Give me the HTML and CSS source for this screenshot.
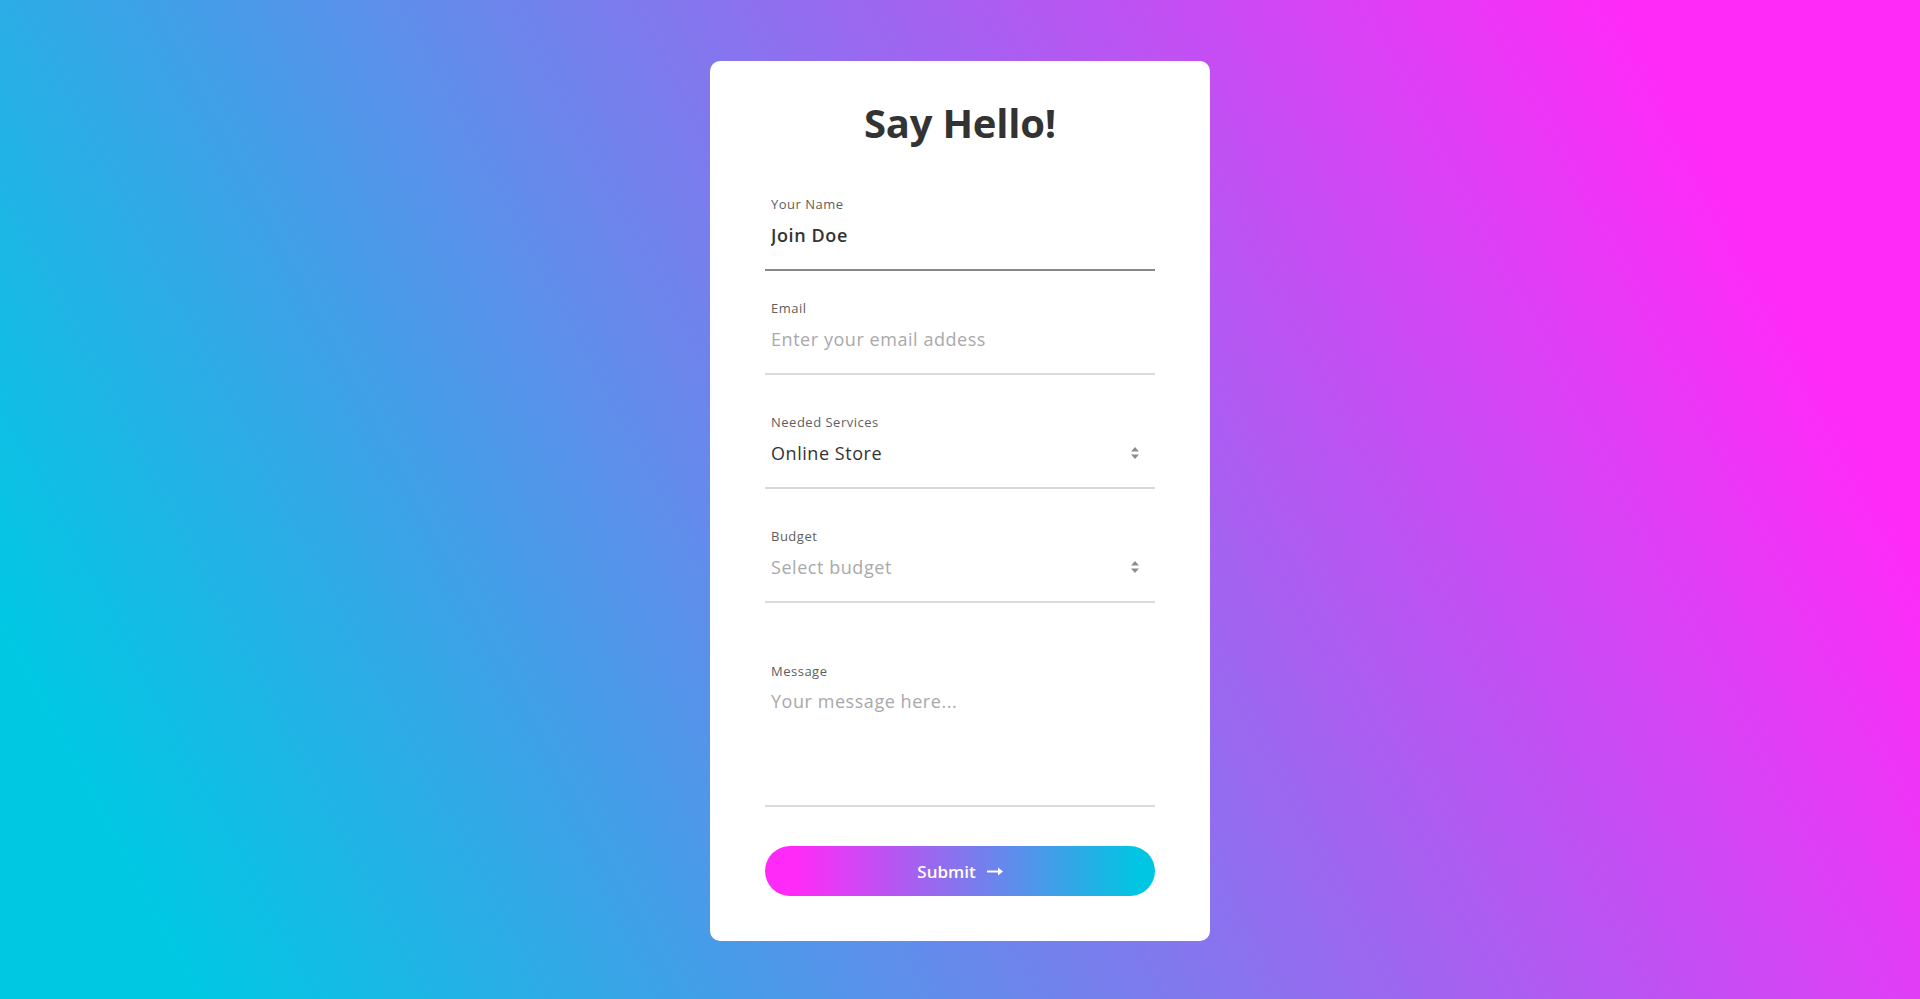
FILE: index.html
```html
<!DOCTYPE html>
<html lang="en">
<head>
<meta charset="utf-8">
<title>Say Hello!</title>
<link rel="stylesheet" href="styles.css">
</head>
<body>
<main class="page">
  <form class="card">
    <h1 class="title">Say Hello!</h1>

    <div class="field field-name">
      <label class="label" for="name">Your Name</label>
      <input class="control control-focus control-strong" id="name" type="text" value="Join Doe">
    </div>

    <div class="field field-email">
      <label class="label" for="email">Email</label>
      <input class="control" id="email" type="email" placeholder="Enter your email addess">
    </div>

    <div class="field">
      <label class="label" for="services">Needed Services</label>
      <div class="select-wrap">
        <select class="control control-select" id="services">
          <option>Online Store</option>
          <option>Website</option>
          <option>Branding</option>
        </select>
        <svg class="select-arrows" width="10" height="14" viewBox="0 0 10 14" aria-hidden="true"><path d="M5 1 L9 5.5 H1 Z M1 8.5 H9 L5 13 Z" fill="#8c8c8c"/></svg>
      </div>
    </div>

    <div class="field">
      <label class="label" for="budget">Budget</label>
      <div class="select-wrap">
        <select class="control control-select control-empty" id="budget">
          <option selected disabled>Select budget</option>
          <option>$1k - $5k</option>
          <option>$5k - $10k</option>
        </select>
        <svg class="select-arrows" width="10" height="14" viewBox="0 0 10 14" aria-hidden="true"><path d="M5 1 L9 5.5 H1 Z M1 8.5 H9 L5 13 Z" fill="#8c8c8c"/></svg>
      </div>
    </div>

    <div class="field field-message">
      <label class="label" for="message">Message</label>
      <textarea class="control control-area" id="message" placeholder="Your message here..."></textarea>
    </div>

    <button class="submit" type="button">
      <span>Submit</span>
      <svg width="16" height="9" viewBox="0 0 16 9" aria-hidden="true"><path d="M0 4.5 H12" stroke="#fff" stroke-width="2"/><path d="M11 0.5 L16 4.5 L11 8.5 Z" fill="#fff"/></svg>
    </button>
  </form>
</main>
</body>
</html>
```

FILE: styles.css
```css
* {
  box-sizing: border-box;
}

html, body {
  margin: 0;
  padding: 0;
}

body {
  min-height: 100vh;
  font-family: "Open Sans", "Liberation Sans", sans-serif;
  background: linear-gradient(62deg, #00c8e3 8%, #ff2af8 88%);
}

.page {
  display: flex;
  justify-content: center;
  padding-top: 61px;
  min-height: 100vh;
}

.card {
  width: 500px;
  background: #fff;
  border-radius: 10px;
  padding: 38px 55px 45px;
  display: flex;
  flex-direction: column;
  align-self: flex-start;
}

.title {
  margin: 0 0 49px;
  font-size: 40px;
  line-height: 48px;
  font-weight: 700;
  color: #333;
  text-align: center;
  letter-spacing: -0.2px;
}

.field {
  display: flex;
  flex-direction: column;
  gap: 11px;
  margin-top: 39px;
}

.field-name {
  margin-top: 0;
}

.field-email {
  margin-top: 29px;
}

.field-message {
  margin-top: 60px;
  gap: 10px;
}

.label {
  display: block;
  padding-left: 6px;
  font-size: 13px;
  line-height: 16px;
  letter-spacing: 0.5px;
  color: #5e5e5e;
}

.control {
  display: block;
  width: 100%;
  height: 48px;
  margin: 0;
  padding: 0 6px 22px;
  border: none;
  border-bottom: 2px solid #dadada;
  border-radius: 0;
  background: transparent;
  font-family: inherit;
  font-size: 18px;
  line-height: 24px;
  letter-spacing: 0.55px;
  color: #333;
  outline: none;
  -webkit-appearance: none;
  appearance: none;
}

.control::placeholder {
  color: #a9a9ab;
  opacity: 1;
}

.control-focus {
  border-bottom-color: #888688;
}

.control-strong {
  font-weight: 600;
  letter-spacing: 0.6px;
}

.select-wrap {
  position: relative;
}

.control-select {
  font-weight: 500;
  cursor: pointer;
}

.control-empty {
  color: #a9a9ab;
  font-weight: 400;
}

.select-arrows {
  position: absolute;
  right: 15px;
  top: 5px;
  pointer-events: none;
}

.control-area {
  height: 118px;
  padding: 0 6px;
  resize: none;
}

.submit {
  margin-top: 39px;
  height: 50px;
  width: 100%;
  border: none;
  border-radius: 25px;
  background: linear-gradient(90deg, #ff2af8 8%, #00c6e3 96%);
  color: #fff;
  font-family: inherit;
  font-size: 17px;
  font-weight: 600;
  display: flex;
  align-items: center;
  justify-content: center;
  gap: 11px;
  cursor: pointer;
  padding: 0;
}
```
